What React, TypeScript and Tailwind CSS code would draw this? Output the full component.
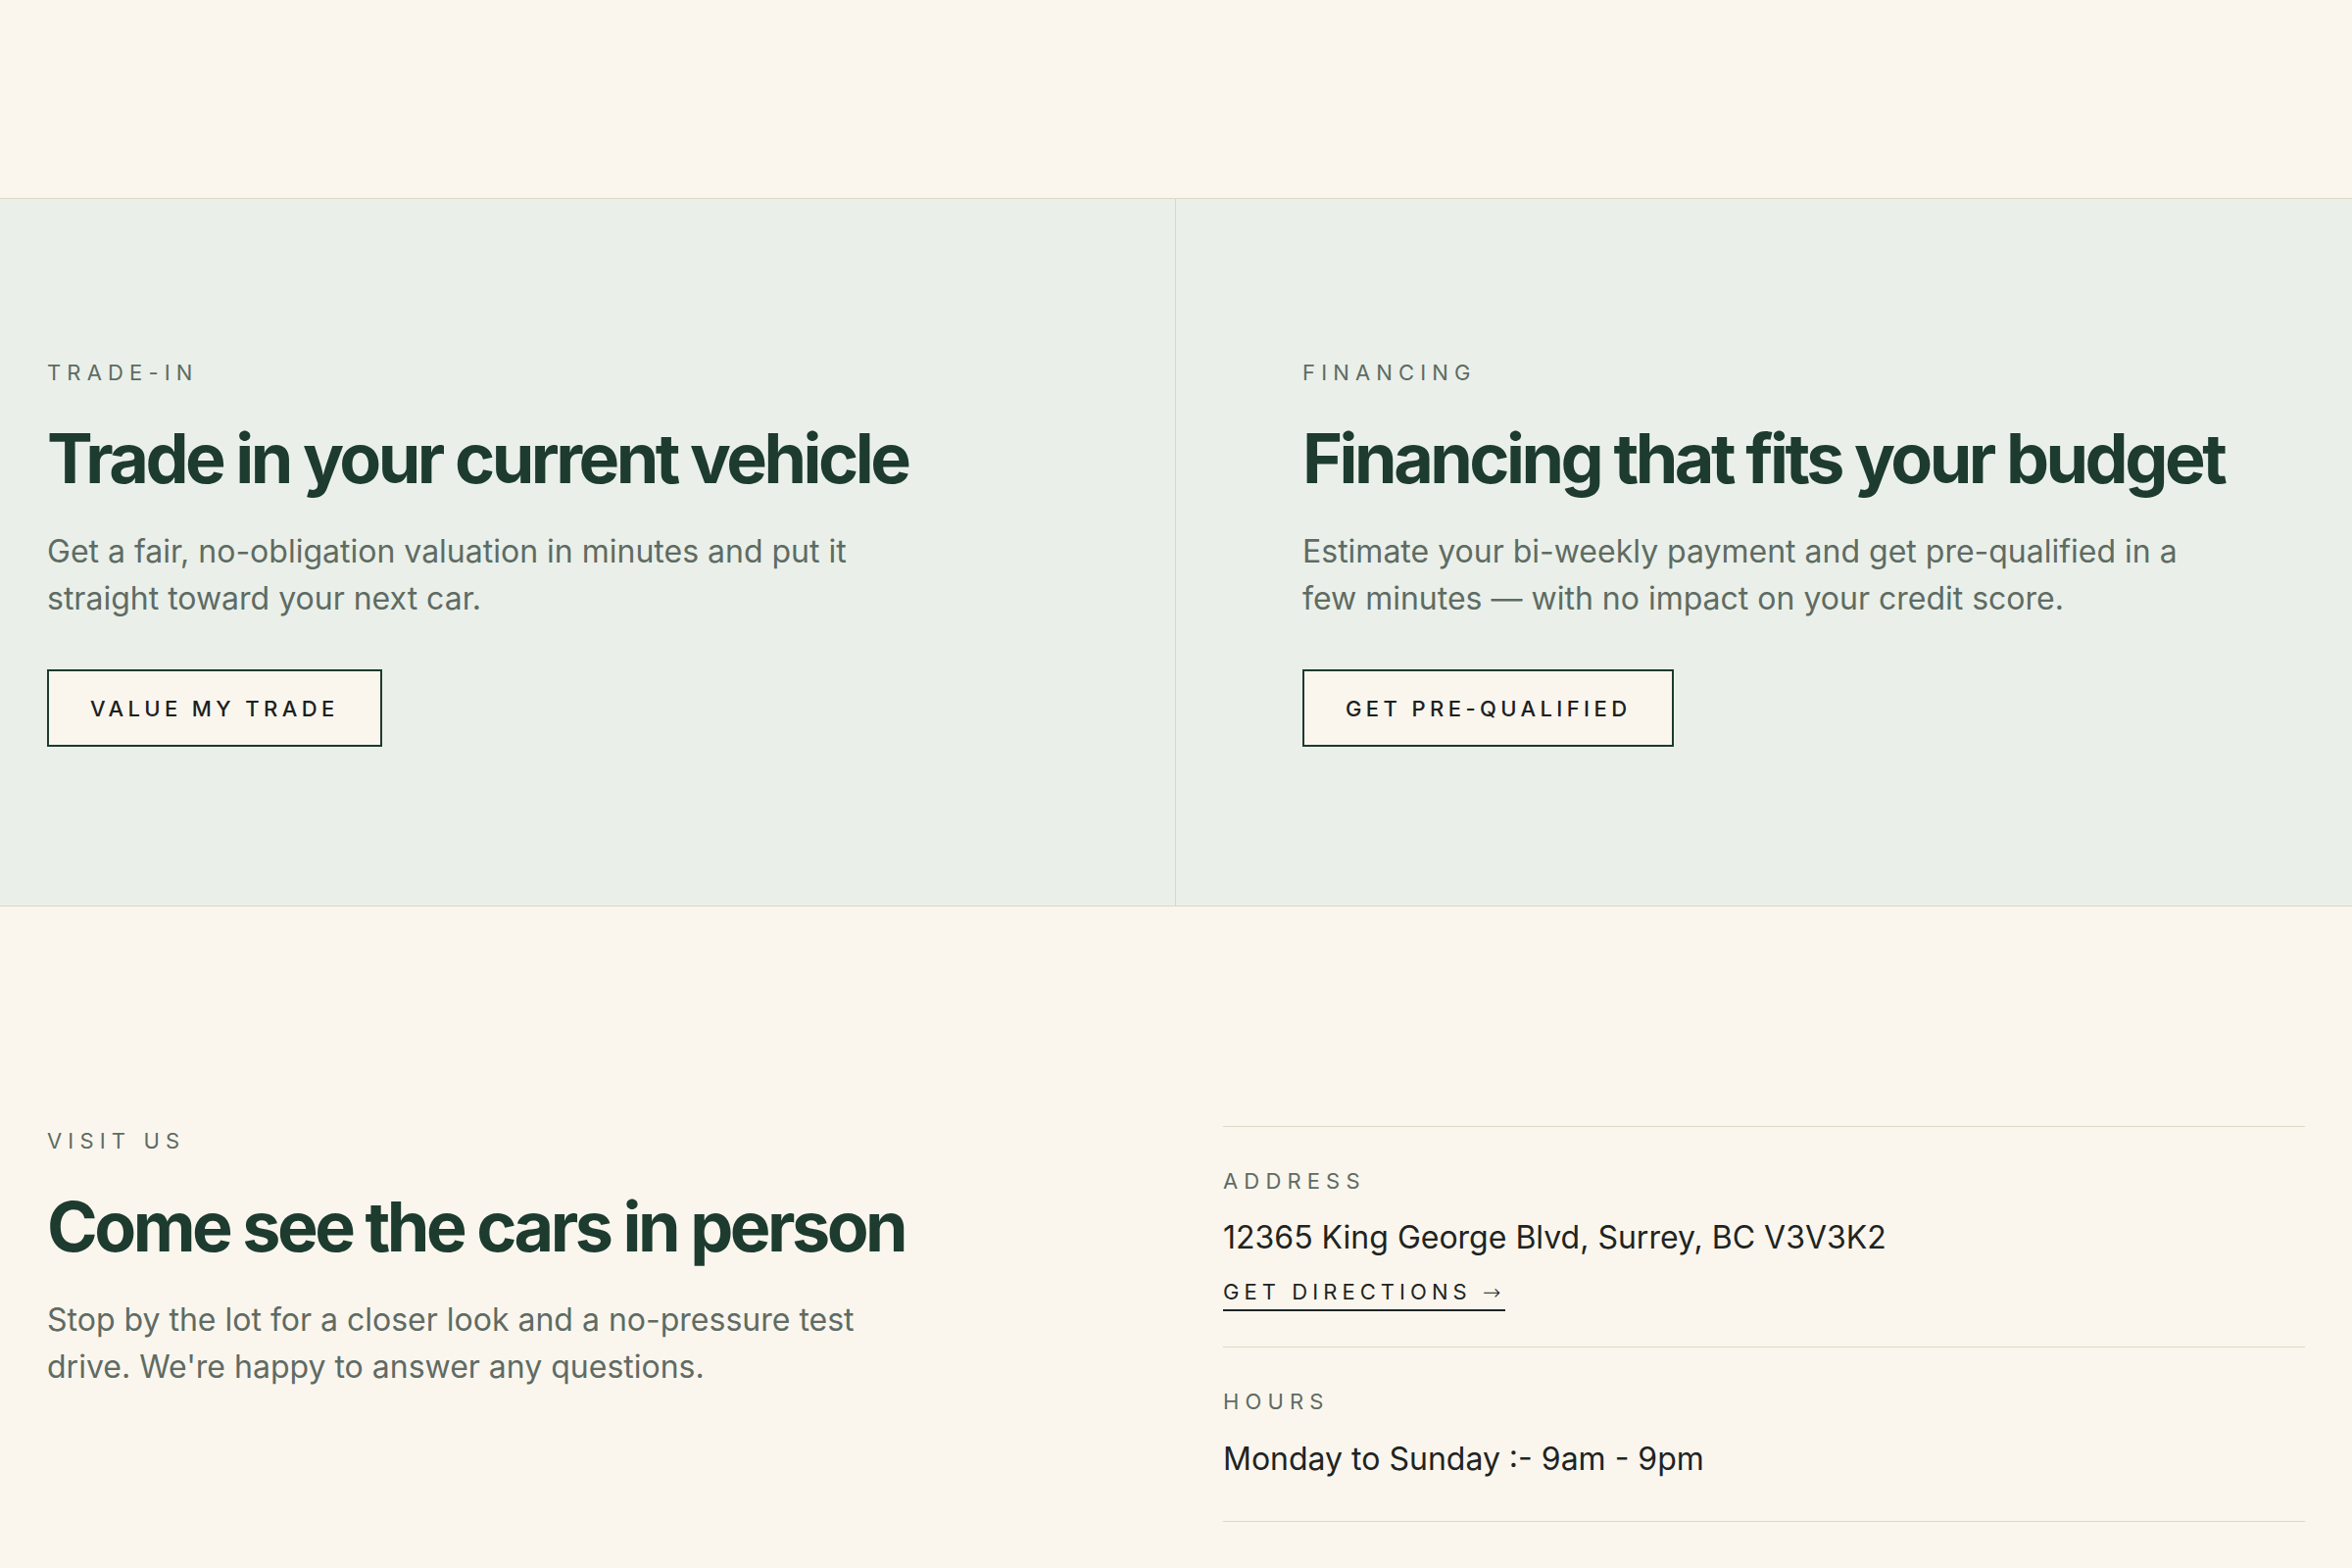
import React from 'react'

const FONT = "font-['Inter','Liberation_Sans',sans-serif]"

interface Offer {
  eyebrow: string;
  title: string;
  body: string;
  cta: string;
}

const OFFERS: Offer[] = [
  {
    eyebrow: 'Trade-in',
    title: 'Trade in your current vehicle',
    body: 'Get a fair, no-obligation valuation in minutes and put it straight toward your next car.',
    cta: 'Value my trade'
  },
  {
    eyebrow: 'Financing',
    title: 'Financing that fits your budget',
    body: 'Estimate your bi-weekly payment and get pre-qualified in a few minutes — with no impact on your credit score.',
    cta: 'Get pre-qualified'
  }
];

const Eyebrow: React.FC<{ children: React.ReactNode }> = ({ children }) => (
  <span className="block text-[22px] leading-[30px] uppercase tracking-[0.28em] text-[#5e6b63]">{children}</span>
);

const Heading: React.FC<{ children: React.ReactNode }> = ({ children }) => (
  <h2 className="mt-[34px] text-[70px] leading-[77px] font-bold tracking-[-0.05em] text-[#1d3b2f]">{children}</h2>
);

const Lead: React.FC<{ children: React.ReactNode }> = ({ children }) => (
  <p className="mt-[33px] max-w-[905px] text-[32px] leading-[47.5px] text-[#5f6b63]">{children}</p>
);

const OfferPanel: React.FC<{ offer: Offer; className: string }> = ({ offer, className }) => (
  <div className={`pt-[162px] pb-[162px] ${className}`}>
    <Eyebrow>{offer.eyebrow}</Eyebrow>
    <Heading>{offer.title}</Heading>
    <Lead>{offer.body}</Lead>
    <button className="mt-[49px] h-[79px] px-[42px] flex items-center border-2 border-[#1d3b2f] bg-[#faf6ee] text-[22px] leading-[30px] font-medium uppercase tracking-[0.2em] text-[#1c211e]">
      {offer.cta}
    </button>
  </div>
);

export default function App() {
  return (
    <div className={`${FONT} min-h-screen bg-[#faf6ee] antialiased`}>
      {/* tail of the previous section */}
      <div className="h-[203px] border-b border-[#dcd8c6]" />

      {/* trade-in / financing split */}
      <section className="grid grid-cols-2 bg-[#eaf0e9] border-b border-[#dcd8c6]">
        <OfferPanel offer={OFFERS[0]} className="pl-12 pr-16 border-r border-[#dcd8c6]" />
        <OfferPanel offer={OFFERS[1]} className="pl-[129px] pr-12" />
      </section>

      {/* visit us */}
      <section className="px-12 pt-[224px] pb-40 grid grid-cols-2 gap-24">
        <div>
          <Eyebrow>Visit us</Eyebrow>
          <Heading>Come see the cars in person</Heading>
          <Lead>Stop by the lot for a closer look and a no-pressure test drive. We're happy to answer any questions.</Lead>
        </div>

        <div className="border-b border-[#dcd8c6]">
          <div className="border-t border-[#dcd8c6] pt-10 pb-[36px]">
            <Eyebrow>Address</Eyebrow>
            <p className="mt-[23px] text-[32px] leading-[40px] text-[#1f2421]">12365 King George Blvd, Surrey, BC V3V3K2</p>
            <a href="#" className="mt-5 inline-block border-b-2 border-[#1f2421] pb-[2px] text-[22px] leading-[30px] uppercase tracking-[0.23em] text-[#1f2421]">
              Get directions <span className="font-['DejaVu_Sans',sans-serif] font-light">→</span>
            </a>
          </div>
          <div className="border-t border-[#dcd8c6] pt-10 pb-[43px]">
            <Eyebrow>Hours</Eyebrow>
            <p className="mt-6 text-[32px] leading-[40px] text-[#1f2421]">Monday to Sunday :- 9am - 9pm</p>
          </div>
        </div>
      </section>
    </div>
  );
}
